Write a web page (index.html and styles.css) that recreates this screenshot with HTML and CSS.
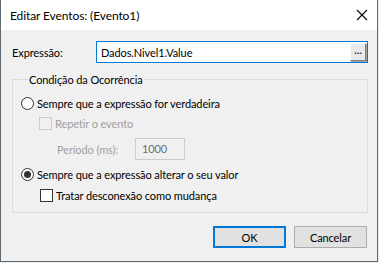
FILE: index.html
```html
<!DOCTYPE html>
<html>
<head>
    <title>Editar Eventos</title>
    <link rel="stylesheet" href="styles.css">
</head>
<body>

    <div class="window">
        <!-- Title bar -->
        <div class="titlebar">
            <span class="title">Editar Eventos: (Evento1)</span>
            <svg class="close" width="12" height="12" viewBox="0 0 12 12">
                <path d="M1 1 L11 11 M11 1 L1 11" stroke="#000" stroke-width="1.1" fill="none"/>
            </svg>
        </div>

        <div class="content">
            <!-- Expression -->
            <div class="expr-row">
                <span class="expr-label">Expressão:</span>
                <div class="expr-box">
                    <span class="expr-text">Dados.Nivel1.Value</span>
                    <span class="dots-btn">...</span>
                </div>
            </div>

            <!-- Group box -->
            <div class="group">
                <div class="legend">Condição da Ocorrência</div>

                <div class="row row-radio1">
                    <span class="radio"></span>
                    <span>Sempre que a expressão for verdadeira</span>
                </div>
                <div class="row row-check1 disabled">
                    <span class="check check-disabled"></span>
                    <span>Repetir o evento</span>
                </div>
                <div class="row row-period disabled">
                    <span class="period-label">Período (ms):</span>
                    <span class="period-box">1000</span>
                </div>
                <div class="row row-radio2">
                    <span class="radio radio-on"></span>
                    <span>Sempre que a expressão alterar o seu valor</span>
                </div>
                <div class="row row-check2">
                    <span class="check"></span>
                    <span>Tratar desconexão como mudança</span>
                </div>
            </div>

            <!-- Buttons -->
            <div class="buttons">
                <button class="btn btn-default">OK</button>
                <button class="btn">Cancelar</button>
            </div>
        </div>
    </div>

</body>
</html>
```

FILE: styles.css
```css
body { margin: 0; padding: 0; background-color: #e8e8e8; font-family: Lato, "Noto Sans", sans-serif; font-size: 11px; letter-spacing: -0.1px; color: #000; }
.window { width: 378px; height: 262px; box-sizing: border-box; border: 1px solid #5e6a74; border-top: none; background-color: #f0f0f0; display: flex; flex-direction: column; }
.titlebar { height: 30px; background-color: #fff; display: flex; align-items: center; justify-content: space-between; padding: 0 9px 0 9px; flex-shrink: 0; }
.title { font-size: 12px; letter-spacing: -0.1px; }
.close { display: block; }
.content { padding: 11px 9px 0 11px; }

.expr-row { display: flex; align-items: center; }
.expr-label { width: 84px; }
.expr-box { flex: 1; height: 22px; box-sizing: border-box; border: 1px solid #0078d7; background-color: #fff; display: flex; align-items: center; justify-content: space-between; padding: 0 1px 0 4px; }
.dots-btn { width: 16px; height: 18px; box-sizing: border-box; background-color: #e9e9e9; border: 1px solid #fff; border-right-color: #808080; border-bottom-color: #808080; box-shadow: 1px 1px 0 #a0a0a0; font-size: 11px; line-height: 12px; text-align: center; }

.group { margin-top: 16px; border: 1px solid #dcdcdc; padding: 0 0 7px 8px; }
.legend { width: fit-content; margin: -9px 0 0 7px; padding: 0 1px; background-color: #f0f0f0; line-height: 17px; }
.row { display: flex; align-items: center; height: 20px; }
.row-radio1 { margin-top: 5px; }
.row-check1 { margin-left: 18px; }
.row-period { height: 22px; margin-top: 5px; margin-left: 36px; }
.row-radio2 { margin-top: 4px; }
.row-check2 { margin-top: 1px; margin-left: 19px; }
.disabled { color: #a0a0a0; }

.radio { width: 13px; height: 13px; box-sizing: border-box; border: 1px solid #333; border-radius: 50%; background-color: #fff; margin-right: 3px; display: flex; align-items: center; justify-content: center; }
.radio-on::after { content: ""; width: 7px; height: 7px; border-radius: 50%; background-color: #333; }
.check { width: 13px; height: 13px; box-sizing: border-box; border: 1px solid #333; background-color: #fff; margin-right: 3px; }
.check-disabled { border-color: #cccccc; background-color: #f0f0f0; }

.period-label { width: 78px; }
.period-box { width: 50px; height: 22px; box-sizing: border-box; border: 1px solid #cccccc; color: #6d6d6d; padding-left: 6px; line-height: 20px; }

.buttons { display: flex; justify-content: flex-end; gap: 8px; margin-top: 13px; padding-right: 1px; }
.btn { width: 73px; height: 22px; box-sizing: border-box; border: 1px solid #adadad; background-color: #e1e1e1; font-family: Lato, "Noto Sans", sans-serif; font-size: 11px; letter-spacing: -0.1px; color: #000; padding: 0; }
.btn-default { border: 2px solid #0078d7; }
```
